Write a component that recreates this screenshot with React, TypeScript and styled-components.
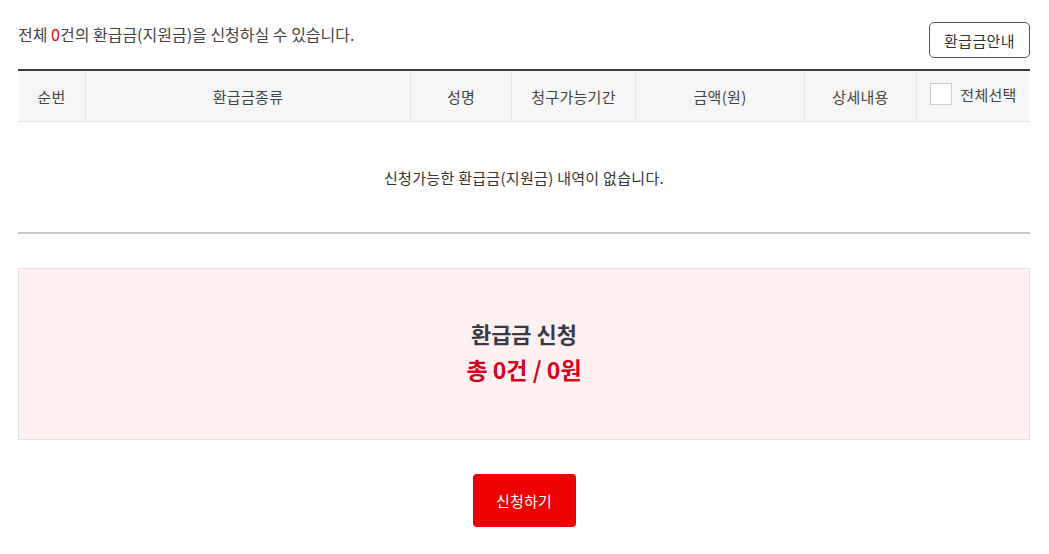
import React from 'react';
import styled, { createGlobalStyle } from 'styled-components';

const GlobalStyle = createGlobalStyle`
  html, body {
    margin: 0;
    padding: 0;
    background: #fff;
  }
  body {
    font-family: "Noto Sans CJK KR", "Noto Sans", sans-serif;
    color: #333;
  }
`;

const Page = styled.div`
  width: 1012px;
  padding: 22px 19px 0 18px;
`;

const TopBar = styled.div`
  display: flex;
  justify-content: space-between;
  align-items: flex-start;
  margin-bottom: 11px;
`;

const Summary = styled.p`
  margin: 0;
  font-size: 16px;
  line-height: 24px;
  color: #444;

  em {
    font-style: normal;
    color: #e60012;
  }
`;

const GuideButton = styled.button`
  height: 36px;
  padding: 0 14px;
  border: 1px solid #555;
  border-radius: 5px;
  background: #fff;
  font-family: inherit;
  font-size: 15px;
  letter-spacing: 0.4px;
  color: #333;
  cursor: pointer;
`;

const Table = styled.table`
  width: 100%;
  border-collapse: collapse;
  border-top: 2px solid #3c3b52;
  table-layout: fixed;
`;

const Th = styled.th<{ $w?: number; $last?: boolean }>`
  width: ${({ $w }) => ($w ? `${$w}px` : 'auto')};
  height: 50px;
  padding: 0;
  background: #f6f6f6;
  border-bottom: 1px solid #e6e6e6;
  border-right: ${({ $last }) => ($last ? 'none' : '1px solid #e3e3e3')};
  font-weight: 400;
  font-size: 15px;
  letter-spacing: 0.3px;
  color: #444;
`;

const CheckLabel = styled.label`
  display: inline-flex;
  align-items: center;
  gap: 8px;
  cursor: pointer;
`;

const CheckBox = styled.span`
  display: inline-block;
  width: 20px;
  height: 20px;
  border: 1px solid #ccc;
  background: #fff;
`;

const EmptyCell = styled.td`
  height: 110px;
  padding: 0;
  text-align: center;
  font-size: 15px;
  letter-spacing: 0.3px;
  color: #333;
  border-bottom: 2px solid #cbcbcb;
`;

const ApplyBox = styled.div`
  margin-top: 34px;
  height: 172px;
  border: 1px solid #e2e0e3;
  background: #fff1f2;
  display: flex;
  flex-direction: column;
  align-items: center;
  padding-top: 49px;
  box-sizing: border-box;
`;

const ApplyTitle = styled.div`
  font-size: 22px;
  font-weight: 700;
  line-height: 30px;
  color: #3a3a46;
`;

const ApplyTotal = styled.div`
  margin-top: 6px;
  font-size: 23px;
  font-weight: 700;
  line-height: 30px;
  color: #d4001c;
`;

const Actions = styled.div`
  display: flex;
  justify-content: center;
  margin-top: 34px;
`;

const SubmitButton = styled.button`
  width: 103px;
  height: 53px;
  border: none;
  border-radius: 4px;
  background: #f00000;
  color: #fff;
  font-family: inherit;
  font-size: 15px;
  letter-spacing: 0.2px;
  cursor: pointer;
`;

const columns = [
  { label: '순번', w: 67 },
  { label: '환급금종류', w: 324 },
  { label: '성명', w: 100 },
  { label: '청구가능기간', w: 123 },
  { label: '금액(원)', w: 168 },
  { label: '상세내용', w: 111 },
];

export default function App() {
  return (
    <>
      <GlobalStyle />
      <Page>
        <TopBar>
          <Summary>
            전체 <em>0</em>건의 환급금(지원금)을 신청하실 수 있습니다.
          </Summary>
          <GuideButton>환급금안내</GuideButton>
        </TopBar>

        <Table>
          <thead>
            <tr>
              {columns.map((c) => (
                <Th key={c.label} $w={c.w}>
                  {c.label}
                </Th>
              ))}
              <Th $last>
                <CheckLabel>
                  <CheckBox />
                  전체선택
                </CheckLabel>
              </Th>
            </tr>
          </thead>
          <tbody>
            <tr>
              <EmptyCell colSpan={7}>신청가능한 환급금(지원금) 내역이 없습니다.</EmptyCell>
            </tr>
          </tbody>
        </Table>

        <ApplyBox>
          <ApplyTitle>환급금 신청</ApplyTitle>
          <ApplyTotal>총 0건 / 0원</ApplyTotal>
        </ApplyBox>

        <Actions>
          <SubmitButton>신청하기</SubmitButton>
        </Actions>
      </Page>
    </>
  );
}
